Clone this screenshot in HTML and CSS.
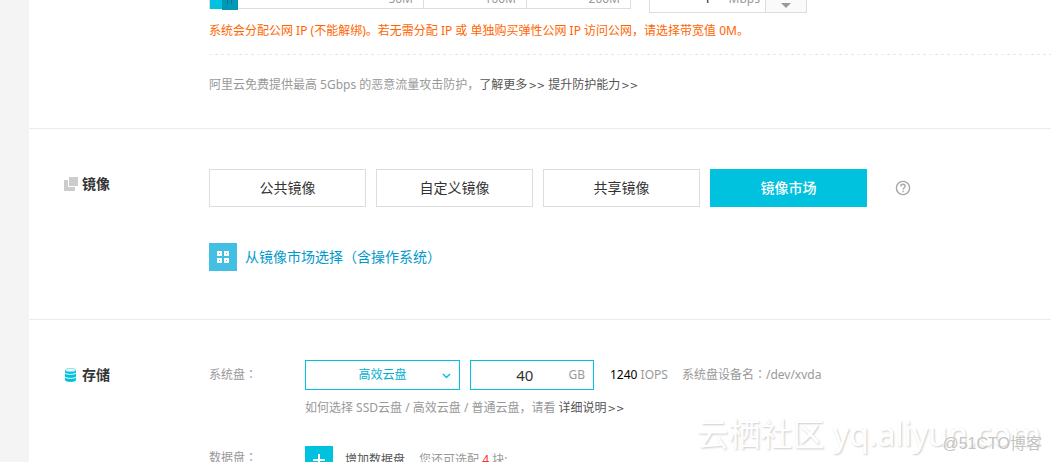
FILE: index.html
```html
<!DOCTYPE html>
<html lang="zh-CN">
<head>
<meta charset="utf-8">
<meta name="viewport" content="width=device-width, initial-scale=1">
<title>云服务器购买</title>
<link rel="stylesheet" href="styles.css">
</head>
<body>
<aside class="rail"></aside>
<main class="page">
  <section class="section section-network">
    <div class="section-body">
      <div class="bandwidth">
        <div class="slider">
          <div class="slider-fill"></div>
          <span class="tick tick-first">50M</span>
          <span class="tick">100M</span>
          <span class="tick">200M</span>
          <input class="slider-range" type="range" min="0" max="200" value="6" aria-label="带宽">
        </div>
        <div class="stepper">
          <input class="stepper-value" type="text" value="1" aria-label="带宽值">
          <span class="stepper-unit">Mbps</span>
          <button class="stepper-down" type="button" aria-label="减少"><svg width="10" height="5" viewBox="0 0 10 5"><path d="M0 0h10L5 5z" fill="#999"/></svg></button>
        </div>
      </div>
      <p class="warning">系统会分配公网 IP (不能解绑)。若无需分配 IP 或 单独购买弹性公网 IP 访问公网，请选择带宽值 0M。</p>
      <p class="protect">阿里云免费提供最高 5Gbps 的恶意流量攻击防护，<a class="more" href="#">了解更多<span class="arrows">&gt;&gt;</span></a> <a class="more" href="#">提升防护能力<span class="arrows">&gt;&gt;</span></a></p>
    </div>
  </section>

  <section class="section section-image">
    <h2 class="section-title">
      <svg class="title-icon" width="14" height="14" viewBox="0 0 14 14"><path d="M5 0h9v9H5z" fill="#ccc"/><path d="M0 3h4v7h7v4H0z" fill="#ccc"/></svg>
      镜像
    </h2>
    <div class="section-body">
      <div class="choices">
        <button class="choice" type="button">公共镜像</button>
        <button class="choice" type="button">自定义镜像</button>
        <button class="choice" type="button">共享镜像</button>
        <button class="choice choice-active" type="button">镜像市场</button>
        <button class="help" type="button" aria-label="帮助"><svg width="16" height="16" viewBox="0 0 16 16" fill="none" stroke="#a6a6a6" stroke-width="1.4"><circle cx="8" cy="8" r="6.6"/><path d="M5.8 6.4c0-1.3 1-2.1 2.2-2.1s2.2.8 2.2 1.9c0 1.5-2.1 1.7-2.1 3.4"/><path d="M8.1 10.7v1.5"/></svg></button>
      </div>
      <a class="market" href="#">
        <span class="market-icon"><svg width="12" height="12" viewBox="0 0 12 12" fill="none" stroke="#fff" stroke-width="2"><path d="M1 1h3v3H1zM8 1h3v3H8zM1 8h3v3H1zM8 8h3v3H8z"/></svg></span>
        从镜像市场选择（含操作系统）
      </a>
    </div>
  </section>

  <section class="section section-storage">
    <h2 class="section-title">
      <svg class="title-icon" width="14" height="14" viewBox="0 0 14 14"><path d="M1 2v10c0 2.6 11 2.6 11 0V2z" fill="#00c1de"/><path d="M1 5c1 1.8 10 1.8 11 0M1 9c1 1.8 10 1.8 11 0" fill="none" stroke="#fff"/><ellipse cx="6.500" cy="2" rx="5" ry="1.600" fill="#e9fafd" stroke="#8adfee"/></svg>
      存储
    </h2>
    <div class="section-body">
      <div class="disk">
        <label class="disk-label" for="disk-type">系统盘<span class="colon" lang="zh-Hant">：</span></label>
        <div class="disk-fields">
          <div class="disk-row">
            <div class="select-box">
              <select class="select" id="disk-type"><option>高效云盘</option></select>
              <svg class="select-arrow" width="9" height="6" viewBox="0 0 9 6"><path d="M1 1l3.500 3.500L8 1" fill="none" stroke="#00c1de" stroke-width="1.400"/></svg>
            </div>
            <div class="size-box">
              <input class="size" type="text" value="40" aria-label="系统盘大小">
              <span class="size-unit">GB</span>
            </div>
            <span class="iops"><b class="iops-value">1240</b> IOPS</span>
            <span>系统盘设备名<span class="colon" lang="zh-Hant">：</span>/dev/xvda</span>
          </div>
          <p class="hint">如何选择 SSD云盘 / 高效云盘 / 普通云盘，请看 <a class="more" href="#">详细说明<span class="arrows">&gt;&gt;</span></a></p>
        </div>
      </div>
      <div class="disk">
        <span class="disk-label data-label">数据盘<span class="colon" lang="zh-Hant">：</span></span>
        <div class="disk-add">
          <button class="add" type="button"><span class="add-icon"><svg width="12" height="12" viewBox="0 0 12 12"><path d="M6 0v12M0 6h12" stroke="#fff" stroke-width="2"/></svg></span>增加数据盘</button>
          <span>您还可选配 <em class="count">4</em> 块;</span>
        </div>
      </div>
    </div>
  </section>
</main>
<div class="watermark">云栖社区 yq.aliyun.com</div>
<div class="credit">@51CTO博客</div>
</body>
</html>
```

FILE: styles.css
```css
* { box-sizing: border-box; }
body {
  position: relative;
  display: flex;
  height: 100vh;
  margin: 0;
  overflow: hidden;
  background: #fff;
  color: #999;
  font: 12px/24px "Noto Sans", "Noto Sans CJK SC", sans-serif;
}
button, input, select { margin: 0; padding: 0; font: inherit; }
a { text-decoration: none; }
p { margin: 0; }

.rail { flex: 0 0 29px; background: #f4f4f4; }
.page { flex: 1; min-width: 0; }
.section {
  display: grid;
  grid-template-columns: 145px 1fr;
  padding-left: 35px;
  border-bottom: 1px solid #ebebeb;
}
.section-body { grid-column: 2; min-width: 0; }
.section-title {
  display: flex;
  align-items: center;
  gap: 4px;
  height: 30px;
  margin: 0;
  color: #333;
  font-size: 14px;
  font-weight: 700;
}
.more { color: #555; }
.arrows { padding-left: 1px; font-family: "DejaVu Sans", sans-serif; font-size: 10px; line-height: 1; }
.colon { font-family: "Noto Sans CJK TC", sans-serif; line-height: 1; }

/* Bandwidth */
.section-network { padding-bottom: 31px; }
.bandwidth { display: flex; gap: 18px; height: 30px; margin-top: -17px; }
.slider {
  position: relative;
  display: flex;
  width: 422px;
  height: 26px;
  border: 1px solid #ddd;
}
.slider-fill { flex: 0 0 12px; background: #00c1de; margin-bottom: -1px; }
.tick {
  flex: 0 0 103px;
  padding-right: 10px;
  border-right: 1px solid #ddd;
  line-height: 30px;
  text-align: right;
}
.tick:last-of-type { border-right: 0; }
.tick-first { flex: 1; }
.slider-range {
  position: absolute;
  inset: -1px 0 -2px;
  width: 100%;
  background: none;
  appearance: none;
}
.slider-range::-webkit-slider-thumb {
  width: 16px;
  height: 27px;
  border: 0;
  appearance: none;
  background: linear-gradient(#007a94, #007a94) 5px 12px / 1px 9px no-repeat,
    linear-gradient(#007a94, #007a94) 9px 12px / 1px 9px no-repeat, #0098b5;
}
.stepper { display: flex; width: 158px; border: 1px solid #ddd; }
.stepper-value {
  flex: 1;
  min-width: 0;
  padding-left: 36px;
  border: 0;
  background: none;
  color: #333;
  font-size: 14px;
  text-align: center;
}
.stepper-unit { padding-right: 5px; line-height: 30px; }
.stepper-down {
  display: flex;
  align-items: flex-end;
  justify-content: center;
  width: 41px;
  padding-bottom: 4px;
  border: 0;
  border-left: 1px solid #ddd;
  background: #fafafa;
}
.warning { margin-top: 6px; padding-bottom: 11px; color: #f60; }
.protect {
  padding-top: 19px;
  background: repeating-linear-gradient(90deg, #e8e8e8 0 3px, transparent 3px 6px) top / 100% 1px no-repeat;
}

/* Image */
.section-image { padding-top: 40px; padding-bottom: 48px; }
.choices { display: flex; align-items: center; gap: 10px; }
.choice {
  width: 157px;
  height: 38px;
  border: 1px solid #ddd;
  background: #fff;
  color: #333;
  font-size: 14px;
}
.choice-active { border-color: #00c1de; background: #00c1de; color: #fff; font-weight: 500; }
.help { display: flex; margin-left: 18px; border: 0; background: none; }
.market {
  display: inline-flex;
  align-items: center;
  gap: 8px;
  margin-top: 36px;
  color: #0099cc;
  font-size: 14px;
}
.market-icon, .add-icon {
  display: flex;
  align-items: center;
  justify-content: center;
  width: 28px;
  height: 28px;
  background: #43bfe3;
}

/* Storage */
.section-storage { padding-top: 40px; }
.disk { display: grid; grid-template-columns: 96px 1fr; }
.disk-label { line-height: 30px; }
.data-label { line-height: 24px; }
.disk-row { display: flex; align-items: center; white-space: nowrap; }
.select-box { position: relative; width: 155px; margin-right: 10px; }
.select {
  display: block;
  width: 100%;
  height: 30px;
  border: 1px solid #00c1de;
  border-radius: 0;
  appearance: none;
  background: #fff;
  color: #00b0d0;
  text-align-last: center;
}
.select-arrow { position: absolute; top: 13px; right: 9px; pointer-events: none; }
.size-box {
  display: flex;
  align-items: center;
  width: 124px;
  height: 30px;
  margin-right: 16px;
  padding-right: 8px;
  border: 1px solid #00c1de;
}
.size {
  flex: 1;
  min-width: 0;
  padding-left: 10px;
  border: 0;
  background: none;
  color: #333;
  font-size: 15px;
  text-align: center;
}
.iops { margin-right: 14px; }
.iops-value { color: #000; font-weight: 400; }
.hint { padding-top: 6px; padding-bottom: 26px; }
.disk-add { display: flex; align-items: center; gap: 14px; }
.add {
  display: flex;
  align-items: center;
  gap: 12px;
  border: 0;
  background: none;
  color: #555;
}
.add-icon { background: #00c1de; }
.count { color: #f33; font-style: normal; }

.watermark {
  position: absolute;
  right: 10px;
  bottom: 4px;
  color: #fff;
  font-size: 32px;
  line-height: 48px;
  text-shadow: 1px 1px 2px #ccc;
  white-space: nowrap;
}
.credit {
  position: absolute;
  right: 9px;
  bottom: 6px;
  color: #c4c4c4;
  font: 16px/24px "Liberation Sans", "Noto Sans CJK SC", sans-serif;
}
```
